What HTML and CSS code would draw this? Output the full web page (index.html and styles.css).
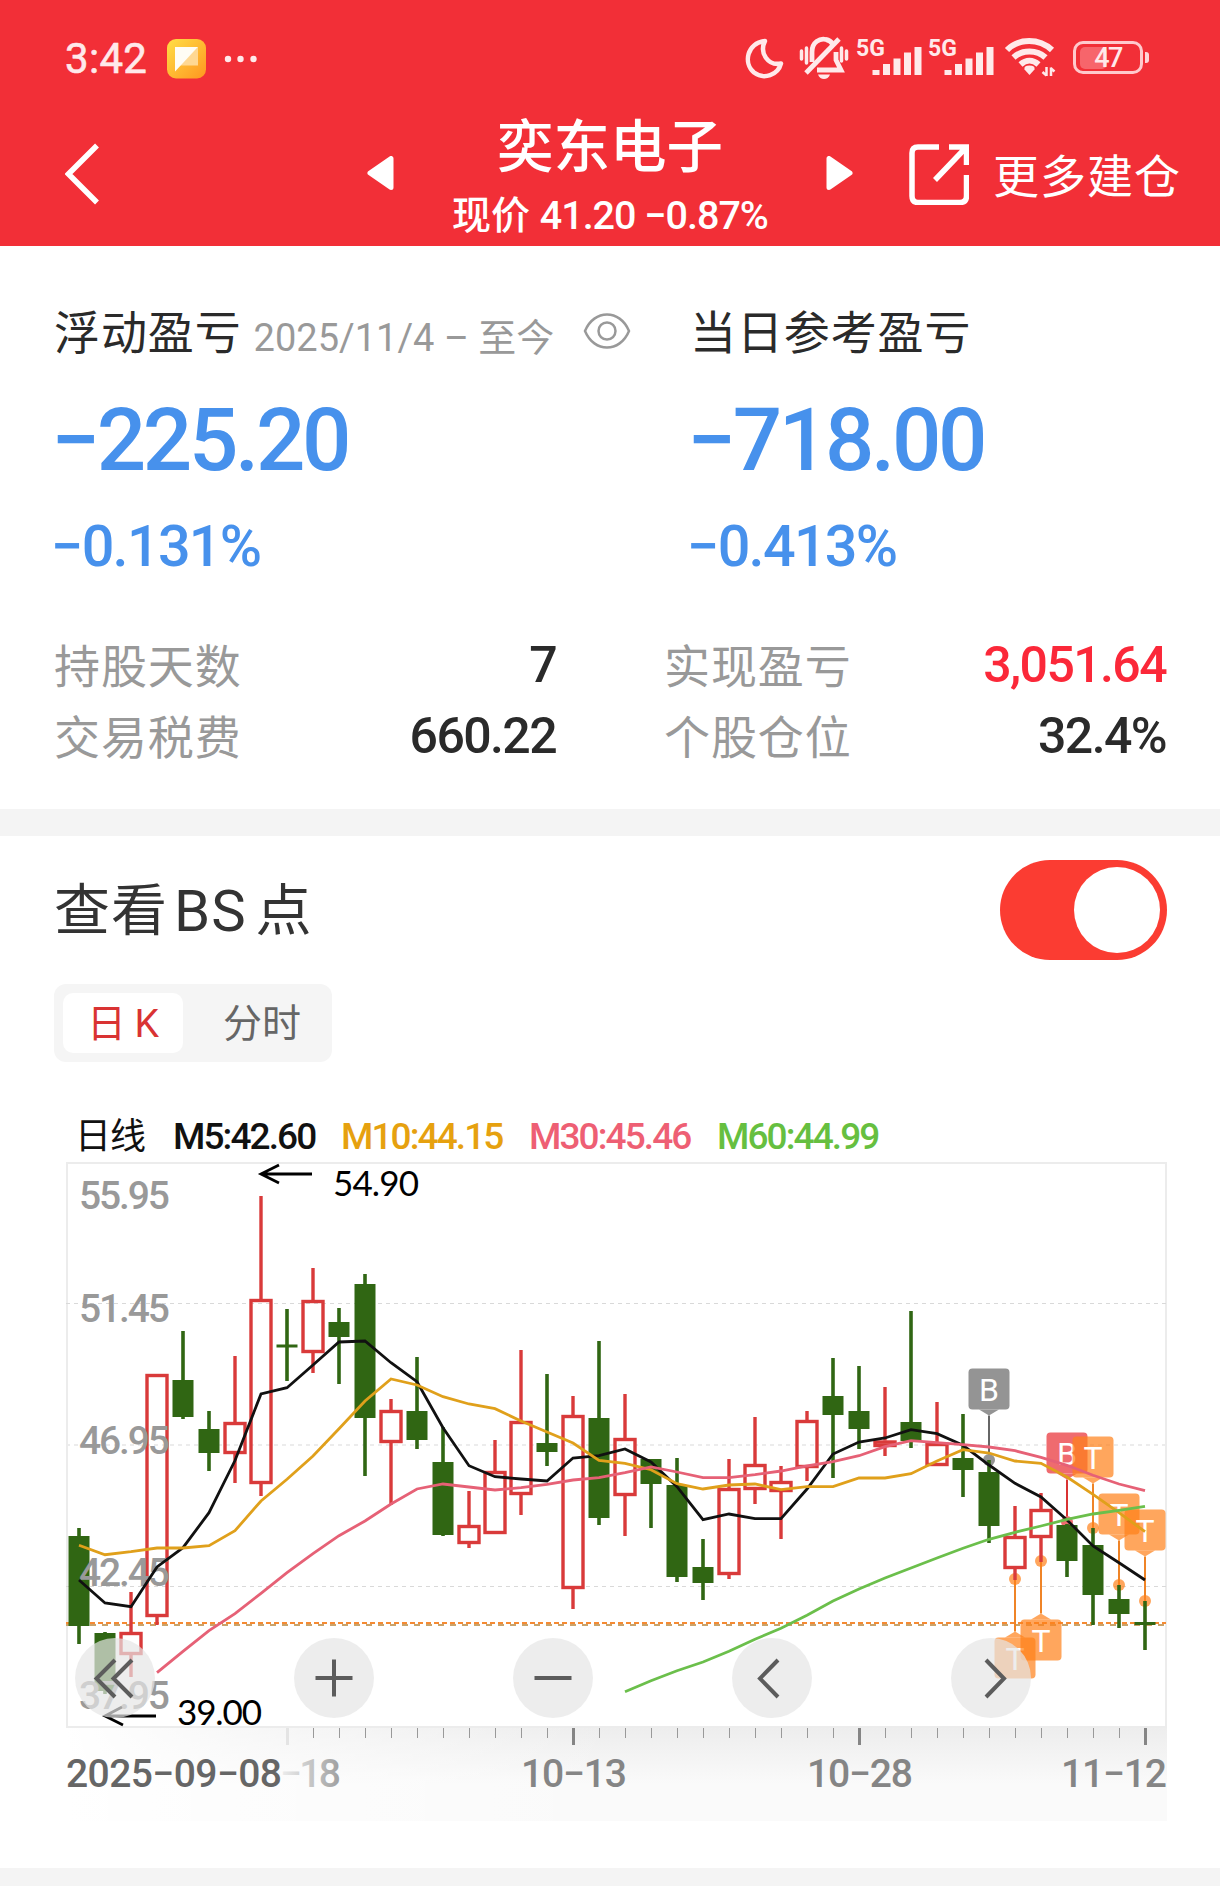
FILE: index.html
```html
<!DOCTYPE html>
<html lang="zh-CN">
<head>
    <meta charset="UTF-8">
    <meta name="viewport" content="width=device-width, initial-scale=1.0">
    <title>奕东电子</title>
    <link rel="stylesheet" href="styles.css">
</head>
<body>
    <header class="header">
        <div class="status-bar">
            <span class="clock">3:42</span>
            <svg class="app-icon" width="40" height="40" viewBox="0 0 40 40">
                <defs>
                    <linearGradient id="app-bg" x1="0" y1="0" x2="1" y2="1">
                        <stop offset="0" stop-color="#ffdf45"/>
                        <stop offset="1" stop-color="#ff9620"/>
                    </linearGradient>
                </defs>
                <rect width="39" height="39.5" rx="9" fill="url(#app-bg)"/>
                <path d="M31 8v18.500H13z" fill="#ffd892"/>
                <path d="M8 8h23L8 32.500z" fill="#fffdf5"/>
            </svg>
            <svg class="dots" width="34" height="8" viewBox="0 0 34 8">
                <circle cx="4" cy="4" r="3.200"/><circle cx="16.500" cy="4" r="3.200"/><circle cx="29.500" cy="4" r="3.200"/>
            </svg>
            <div class="status-icons">
                <svg class="moon" width="40" height="42" viewBox="0 0 40 42">
                    <path d="M20 3C14 15 23 28 36 25.500C33 37 19 42 9 34.500C-2 25 2 5 20 3z"/>
                </svg>
                <svg class="bell" width="50" height="44" viewBox="0 0 50 44">
                    <path d="M13 26V16C13 6 21 2 27 3.500C30.500 4 32.500 6 34 8.500M37 16V24L42 34H18"/>
                    <path d="M40 3L7 37"/>
                    <path class="waves" d="M2.500 15v8M7.500 12v15M42.500 12v13M47.500 15v8"/>
                    <path class="solid" d="M19 38.500h12c-2 6-10 6-12 0z"/>
                </svg>
                <div class="signal">
                    <span>5G</span>
                    <svg width="50" height="34" viewBox="0 0 50 34">
                        <path d="M4 32V27M14.500 32V21M25 32V15.500M35.500 32V9.500M46 32V4"/>
                    </svg>
                </div>
                <div class="signal">
                    <span>5G</span>
                    <svg width="50" height="34" viewBox="0 0 50 34">
                        <path d="M4 32V27M14.500 32V21M25 32V15.500M35.500 32V9.500M46 32V4"/>
                    </svg>
                </div>
                <svg class="wifi" width="52" height="42" viewBox="0 0 52 42">
                    <path d="M3 14C15 2 35 2 48 14M9.500 21.500C18 13.500 33 13.500 41.500 21.500M16.500 28.500C22 23.500 29 23.500 34.500 28.500"/>
                    <path class="solid" d="M25.500 29.500q6 0 5 4l-5 5.500-5-5.500q-1-4 5-4z"/>
                    <path class="thin" d="M42.500 31v9M42.500 39.500l-4-3.500M47 40v-8.500M46.500 32l4 3.500"/>
                </svg>
                <div class="battery"><i></i><span>47</span></div>
            </div>
        </div>
        <nav class="nav">
            <svg class="back" width="36" height="62" viewBox="0 0 36 62">
                <path d="M32 2.500L3.500 31L32 59.500"/>
            </svg>
            <svg class="prev" width="27" height="34" viewBox="0 0 27 34"><path d="M24 2.500V31.500L3 17z"/></svg>
            <div class="stock">
                <h1>奕东电子</h1>
                <p>现价 <b>41.20 −0.87%</b></p>
            </div>
            <svg class="next" width="27" height="34" viewBox="0 0 27 34"><path d="M3 2.500V31.500L24 17z"/></svg>
            <svg class="share" width="60" height="61" viewBox="0 0 60 61">
                <path d="M30 3H9Q3 3 3 9V52Q3 58.500 9 58.500H51Q57.500 58.500 57.500 52V31"/>
                <path d="M40 3H57.500V21M57 3.500L26 36"/>
            </svg>
            <span class="more">更多建仓</span>
        </nav>
    </header>

    <section class="summary">
        <div class="profits">
            <div class="profit">
                <div class="profit-title">
                    <span>浮动盈亏</span>
                    <small>2025/11/4 – 至今</small>
                    <svg class="eye" width="48" height="38" viewBox="0 0 48 38">
                        <path d="M2 19C11-3 37-3 46 19C37 41 11 41 2 19z"/>
                        <circle cx="24" cy="19" r="8.500"/>
                    </svg>
                </div>
                <div class="amount">−225.20</div>
                <div class="rate">−0.131%</div>
            </div>
            <div class="profit">
                <div class="profit-title"><span>当日参考盈亏</span></div>
                <div class="amount">−718.00</div>
                <div class="rate">−0.413%</div>
            </div>
        </div>
        <div class="details">
            <div class="detail"><span>持股天数</span><b>7</b></div>
            <div class="detail"><span>实现盈亏</span><b class="up">3,051.64</b></div>
            <div class="detail"><span>交易税费</span><b>660.22</b></div>
            <div class="detail"><span>个股仓位</span><b>32.4%</b></div>
        </div>
    </section>

    <section class="points">
        <div class="points-head">
            <h2>查看<span>BS</span>点</h2>
            <div class="switch"><i></i></div>
        </div>
        <div class="tabs">
            <span class="tab active">日 K</span>
            <span class="tab">分时</span>
        </div>
        <div class="legend">
            <span class="name">日线</span>
            <span>M5:42.60</span>
            <span class="m10">M10:44.15</span>
            <span class="m30">M30:45.46</span>
            <span class="m60">M60:44.99</span>
        </div>
        <div class="chart">
            <svg id="kline" width="1220" height="670" viewBox="0 0 1220 670">
                <defs>
                    <linearGradient id="axis-bg" x1="0" y1="0" x2="0" y2="1">
                        <stop offset="0" stop-color="#ededed"/>
                        <stop offset=".6" stop-color="#fafafa"/>
                        <stop offset="1" stop-color="#fafafa"/>
                    </linearGradient>
                    <linearGradient id="axis-fade" x1="0" y1="0" x2="1" y2="0">
                        <stop offset="0" stop-color="#fff"/>
                        <stop offset=".15" stop-color="#fff" stop-opacity=".6"/>
                        <stop offset=".5" stop-color="#fff" stop-opacity="0"/>
                        <stop offset="1" stop-color="#fff" stop-opacity="0"/>
                    </linearGradient>
                    <linearGradient id="label-fade" gradientUnits="userSpaceOnUse" x1="280" y1="0" x2="345" y2="0">
                        <stop offset="0" stop-color="#eee"/>
                        <stop offset="1" stop-color="#999"/>
                    </linearGradient>
                </defs>
                <rect x="67" y="568" width="1100" height="93" fill="url(#axis-bg)"/>
                <rect x="67" y="568" width="1100" height="93" fill="url(#axis-fade)"/>
                <rect class="frame" x="67" y="3" width="1099" height="564"/>
                <path class="grid" d="M66 143.500H1166M66 426.500H1166"/>
                <path class="grid mid" d="M66 285H1166"/>
                <path class="cost" d="M66 465H1166"/>
                <path class="now" d="M66 463H1166"/>
                <g id="markers"></g>
                <g id="candles"></g>
                <g class="price-labels">
                    <text x="79" y="49" textLength="91">55.95</text>
                    <text x="79" y="162" textLength="91">51.45</text>
                    <text x="79" y="294" textLength="91">46.95</text>
                    <text x="79" y="425.500" textLength="91">42.45</text>
                    <text x="79" y="548.500" textLength="91">37.95</text>
                </g>
                <g id="averages"></g>
                <g class="extremes">
                    <path d="M312 14H261M279 5L261 14L279 23"/>
                    <text x="333" y="36" textLength="86">54.90</text>
                    <path d="M156 556H105M122 547L105 556L123 565"/>
                    <text x="177" y="565" textLength="85">39.00</text>
                </g>
                <g id="ticks"></g>
                <g class="dates">
                    <text class="first" x="66" y="626.500" textLength="216">2025−09−08</text>
                    <text class="faded" x="280" y="626.500" textLength="61">−18</text>
                    <text x="521" y="626.500" textLength="106">10−13</text>
                    <text x="807" y="626.500" textLength="106">10−28</text>
                    <text x="1061" y="626.500" textLength="106">11−12</text>
                </g>
            </svg>
            <div class="controls">
                <button><svg viewBox="0 0 80 80"><path d="M40 22L21.500 40.500L40 59M57 22L38.500 40.500L57 59"/></svg></button>
                <button><svg viewBox="0 0 80 80"><path d="M40 21.500V58.500M21.500 40H58.500"/></svg></button>
                <button><svg viewBox="0 0 80 80"><path d="M21.500 40H58.500"/></svg></button>
                <button><svg viewBox="0 0 80 80"><path d="M46 22L28 40.500L46 59"/></svg></button>
                <button><svg viewBox="0 0 80 80"><path d="M35 22L53 40.500L35 59"/></svg></button>
            </div>
        </div>
    </section>

    <script>
        const STEP = 26;
        const FIRST_X = 79;

        // high, body top, body bottom, low, rising
        const candles = [
            [368, 376, 466, 484, 0], [472, 473, 531, 534, 0], [432, 472, 495, 517, 1],
            [214, 214, 457, 465, 1], [171, 220, 257, 259, 0], [251, 269, 293, 311, 0],
            [196, 262, 294, 323, 1], [36, 139, 324, 336, 1], [149, 184.5, 187.5, 221, 0],
            [108, 140, 193, 213, 1], [148, 162, 177, 224, 0], [114, 124, 258, 316, 0],
            [239, 250, 283, 345, 1], [197, 251, 280, 289, 0], [267, 302, 375, 376, 0],
            [331, 365, 384, 388, 1], [280, 311, 374, 374, 1], [190, 261, 335, 355, 1],
            [214, 283, 292, 306, 0], [236, 255, 429, 449, 1], [181, 258, 358, 365, 0],
            [234, 278, 336, 376, 1], [299, 299, 324, 368, 0], [298, 325, 417, 422, 0],
            [379, 407, 423, 440, 0], [299, 328, 415, 419, 1], [257, 304, 330, 344, 1],
            [306, 321, 332, 379, 1], [251, 260, 308, 321, 1], [198, 236, 255, 318, 0],
            [206, 251, 269, 289, 0], [227, 280.5, 287, 296, 1], [151, 262, 281, 288, 0],
            [242, 283, 306, 306, 1], [254, 298, 310, 337, 0], [300, 312, 366, 383, 0],
            [346, 376, 409, 420, 1], [333, 349, 378, 402, 1], [364, 365, 401, 417, 0],
            [368, 385, 435, 465, 0], [425, 439, 454, 468, 0], [441, 462, 465, 490, 0]
        ];

        const averages = [
            { color: '#111', start: 0, y: [420, 443, 446.7, 407, 387.7, 352.7, 300.5, 234, 227.7, 205, 182, 181, 202.7, 221.7, 267.7, 305.7, 316.7, 319, 321, 298, 295.7, 289, 302, 326.7, 359.7, 354, 358.7, 358.7, 329, 294, 282, 278, 269.7, 273.7, 285.3, 305, 323.3, 337, 360, 386, 402.7, 420] },
            { color: '#e0a01b', start: 0, y: [385.3, 394.7, 391.7, 388, 388, 385.7, 370.7, 341, 319.3, 296, 268.7, 241, 219, 225, 236.7, 244, 248.7, 261, 272, 283, 300.3, 303.3, 309.7, 323.7, 329, 325, 324, 329.7, 326.7, 326.7, 318, 318, 313.7, 301, 289.7, 293, 301, 303.3, 317, 334.3, 352.7, 371.7] },
            { color: '#e66176', start: 3, y: [512.7, 491.3, 470.7, 453.7, 433.3, 412.7, 393.7, 375.7, 361, 344, 329, 324, 327, 330, 327.7, 324.3, 320, 317.7, 312.7, 307, 312, 317.7, 317.7, 314.7, 311, 306, 301.7, 295.7, 286.7, 280.7, 282.7, 284.7, 287, 290.7, 297.3, 305.3, 315.3, 324, 330.7] },
            { color: '#6bbf4b', start: 21, y: [531.7, 520.7, 510.7, 502, 491.3, 479.3, 468.3, 455.3, 441, 429, 418, 408, 398, 388.3, 379.3, 372.3, 366, 359.3, 354, 350.3, 346.3] }
        ];

        // box is the top of the label, dot is the end of its stem
        const markers = [
            { i: 35, text: 'B', type: 'gray', box: 208.5, dot: 300 },
            { i: 38, text: 'B', type: 'buy', box: 272.5, dot: 362 },
            { i: 39, text: 'T', type: 'both', box: 276.5, dot: 368 },
            { i: 36, text: 'T', type: 'both', box: 477.5, dot: 419 },
            { i: 37, text: 'T', type: 'both', box: 459.5, dot: 401 },
            { i: 40, text: 'T', type: 'both', box: 333.5, dot: 425 },
            { i: 41, text: 'T', type: 'both', box: 349.5, dot: 441 }
        ];

        const px = i => FIRST_X + i * STEP;

        document.getElementById('candles').innerHTML = candles.map(([high, top, bottom, low, up], i) => {
            const x = px(i);
            if (up) {
                return `<path class="up" d="M${x} ${high}V${top}M${x} ${bottom}V${low}"/>
                    <rect class="up" x="${x - 10}" y="${top + 1.5}" width="20" height="${bottom - top - 3}"/>`;
            }
            return `<path class="down" d="M${x} ${high}V${low}"/>
                <rect class="down" x="${x - 10.5}" y="${top}" width="21" height="${bottom - top}"/>`;
        }).join('');

        document.getElementById('averages').innerHTML = averages.map(line => {
            const points = line.y.map((y, n) => `${px(line.start + n)},${y}`).join(' ');
            return `<polyline points="${points}" stroke="${line.color}"/>`;
        }).join('');

        document.getElementById('markers').innerHTML = markers.map(m => {
            const x = px(m.i);
            const below = m.box > m.dot;
            const edge = below ? m.box : m.box + 41;
            const tip = below ? edge - 6 : edge + 6;
            return `<g class="${m.type}">
                <path class="stem" d="M${x} ${m.dot}V${tip}"/>
                <circle cx="${x}" cy="${m.dot}" r="6"/>
                <rect x="${x - 20.5}" y="${m.box}" width="41" height="41" rx="4"/>
                <path d="M${x - 10} ${edge}H${x + 10}L${x} ${tip}z"/>
                <text x="${x}" y="${m.box + 32}">${m.text}</text>
            </g>`;
        }).join('');

        let ticks = '<path class="major light" d="M287.500 568V585"/>';
        for (let i = 9; i < candles.length; i++) {
            const major = i === 19 || i === 30 || i === 41;
            ticks += `<path class="${major ? 'major' : ''}" d="M${px(i) + 0.5} 568V${major ? 585 : 578}"/>`;
        }
        document.getElementById('ticks').innerHTML = ticks;
    </script>
</body>
</html>
```

FILE: styles.css
```css
:root {
    --red: #f22f37;
    --blue: #4791ec;
    --text: #2a2a2a;
    --gray: #999;
    --line: #f4f4f4;
}

* {
    margin: 0;
    padding: 0;
    box-sizing: border-box;
}

body {
    width: 1220px;
    height: 1886px;
    overflow: hidden;
    background: #fff;
    color: var(--text);
    font-family: Roboto, 'Noto Sans CJK SC', sans-serif;
}

svg {
    display: block;
    flex: none;
    fill: none;
}

/* header */
.header {
    height: 246px;
    background: var(--red);
    color: #fff;
}

.status-bar {
    display: flex;
    align-items: center;
    height: 118px;
    padding: 0 72px 0 65px;
    color: #ffe9ea;
}

.clock {
    width: 102px;
    font-size: 42px;
    line-height: 50px;
    letter-spacing: 0.3px;
    -webkit-text-stroke: 0.6px #ffe9ea;
}

.dots {
    margin-left: 17px;
    fill: #ffe9ea;
}

.status-icons {
    display: flex;
    align-items: center;
    margin-left: auto;
    stroke: #ffe9ea;
}

.moon {
    stroke-width: 4.5;
    stroke-linejoin: round;
    margin-right: 14px;
}

.bell {
    stroke-width: 4.8;
    margin: 0 7px 2px 0;
}

.bell .waves {
    stroke-width: 3.5;
    stroke-linecap: round;
}

.solid {
    fill: #ffe9ea;
    stroke: none;
}

.signal {
    display: grid;
    width: 66px;
    height: 42px;
    margin-right: 6px;
}

.signal span {
    grid-area: 1 / 1;
    font-size: 23px;
    line-height: 22px;
    font-weight: 700;
}

.signal svg {
    grid-area: 1 / 1;
    justify-self: end;
    align-self: end;
    margin-bottom: 3px;
    stroke-width: 7;
}

.wifi {
    stroke-width: 6;
    margin: 0 15px 4px 4px;
}

.wifi .thin {
    stroke-width: 2.5;
}

.battery {
    display: grid;
    position: relative;
    width: 70px;
    height: 33px;
    margin: 0 5px 3px 2px;
    border: 3px solid #ffc9cc;
    border-radius: 10px;
}

.battery::after {
    content: '';
    position: absolute;
    right: -9px;
    top: 8px;
    width: 4px;
    height: 11px;
    border-radius: 0 3px 3px 0;
    background: #ffd5d7;
}

.battery i {
    grid-area: 1 / 1;
    width: 27px;
    margin: 3px 4px;
    border-radius: 5px;
    background: #f7656b;
}

.battery span {
    grid-area: 1 / 1;
    z-index: 1;
    text-align: center;
    font-size: 27px;
    line-height: 28px;
    font-weight: 500;
    letter-spacing: -1.5px;
}

.nav {
    display: flex;
    height: 128px;
    padding-left: 65px;
    stroke: #fff;
}

.back {
    margin-top: 25px;
    stroke-width: 5.5;
}

.prev,
.next {
    margin-top: 38px;
    fill: #fff;
    stroke-width: 5;
    stroke-linejoin: round;
}

.prev {
    margin-left: 266px;
}

.stock {
    width: 432px;
    text-align: center;
    white-space: nowrap;
}

.stock h1 {
    font-size: 56.500px;
    line-height: 66px;
    font-weight: 500;
    margin-top: -3px;
}

.stock p {
    font-size: 39px;
    line-height: 44px;
    margin-top: 13px;
    font-weight: 500;
}

.stock b {
    font-weight: 500;
    font-size: 39.500px;
    letter-spacing: -1px;
}

.share {
    margin: 26px 0 0 56px;
    stroke-width: 5.5;
}

.more {
    margin-left: 24px;
    font-size: 46px;
    line-height: 60px;
    letter-spacing: 1px;
    margin-top: 29px;
}

/* profit summary */
.summary {
    height: 590px;
    padding: 57px 54px 0;
    border-bottom: 27px solid var(--line);
}

.profits {
    display: grid;
    grid-template-columns: 636px 1fr;
}

.profit-title {
    display: flex;
    align-items: center;
    height: 60px;
    font-size: 46px;
    line-height: 60px;
    letter-spacing: 0.9px;
}

.profit-title small {
    margin: 10px 0 0 12px;
    width: 329px;
    color: var(--gray);
    font-size: 38px;
    letter-spacing: 0;
    white-space: nowrap;
}

.eye {
    margin-bottom: 4px;
    stroke: var(--gray);
    stroke-width: 2.5;
}

.amount {
    margin: 27px 0 0 -3px;
    color: var(--blue);
    font-size: 87px;
    line-height: 100px;
    font-weight: 500;
    letter-spacing: -3.3px;
}

.rate {
    margin: 24px 0 0 -3px;
    color: var(--blue);
    font-size: 57.500px;
    line-height: 66px;
    font-weight: 500;
    letter-spacing: -1.7px;
}

.details {
    display: grid;
    grid-template-columns: 502px 502px;
    column-gap: 108px;
    margin-top: 50px;
}

.detail {
    display: flex;
    justify-content: space-between;
    height: 71px;
    line-height: 71px;
}

.detail span {
    padding-top: 2px;
    color: var(--gray);
    font-size: 46px;
    letter-spacing: 0.9px;
}

.detail b {
    font-size: 50px;
    font-weight: 500;
    letter-spacing: -1.6px;
}

.detail .up {
    color: #fb2839;
}

/* BS points */
.points {
    height: 1050px;
    border-bottom: 18px solid var(--line);
}

.points-head {
    display: flex;
    justify-content: space-between;
    padding: 24px 53px 0 54px;
    height: 148px;
}

.points h2 {
    display: flex;
    font-size: 56px;
    line-height: 102px;
    font-weight: 400;
    color: #333;
    letter-spacing: 1px;
}

.points h2 span {
    margin: 0 9px 0 6px;
    font-size: 58px;
}

.switch {
    width: 167px;
    height: 100px;
    padding: 7px;
    border-radius: 50px;
    background: #fb3c32;
}

.switch i {
    display: block;
    width: 86px;
    height: 86px;
    margin-left: auto;
    border-radius: 50%;
    background: #fff;
}

.tabs {
    display: flex;
    width: 278px;
    height: 78px;
    margin-left: 54px;
    padding: 9px;
    border-radius: 12px;
    background: #f5f5f5;
}

.tab {
    width: 120px;
    border-radius: 10px;
    color: #666;
    font-size: 39px;
    line-height: 62px;
    text-align: center;
}

.tab + .tab {
    margin-left: 19px;
}

.tab.active {
    background: #fff;
    color: #d93333;
    word-spacing: -1px;
}

.legend {
    display: flex;
    height: 98px;
    padding: 51px 0 0 75px;
    font-size: 37px;
    line-height: 48px;
    font-weight: 500;
    color: #111;
    letter-spacing: -1.9px;
}

.legend span {
    width: 188px;
    white-space: nowrap;
}

.legend span:nth-child(2) {
    width: 168px;
}

.legend .name {
    width: 98px;
    font-size: 36px;
    font-weight: 400;
    letter-spacing: -1px;
}

.legend .m10 { color: #e6a10f; }
.legend .m30 { color: #ee5f74; }
.legend .m60 { color: #66bf40; }

/* chart */
.chart {
    position: relative;
}

.frame {
    stroke: #ececec;
    stroke-width: 2;
}

.grid {
    stroke: #d9d9d9;
    stroke-dasharray: 4 4;
}

.grid.mid {
    stroke: #ececec;
    stroke-width: 2;
}

.cost {
    stroke: #c9a36b;
    stroke-width: 2;
    stroke-dasharray: 6 6;
}

.now {
    stroke: #f58a33;
    stroke-width: 2;
    stroke-dasharray: 5 3;
}

.chart .up {
    stroke: #d93a3a;
    stroke-width: 3.4;
}

.chart .down {
    stroke: #306613;
    stroke-width: 3.6;
}

.chart rect.down {
    fill: #306613;
    stroke: none;
}

#averages {
    stroke-width: 2.8;
}

#markers text {
    fill: #fff;
    font-family: Roboto, sans-serif;
    font-size: 32px;
    text-anchor: middle;
}

.gray { fill: #949494; stroke: #666; }
.buy { fill: #ef6b6f; stroke: #d93333; }
.both { fill: rgba(255, 128, 24, 0.7); stroke: #ef8427; }

#markers rect,
#markers circle,
#markers text,
#markers path {
    stroke: none;
}

#markers .stem {
    stroke: inherit;
    stroke-width: 2;
}

.price-labels {
    fill: #999;
    font-size: 39px;
    font-weight: 500;
}

.extremes {
    stroke: #000;
    stroke-width: 2.8;
}

.extremes text {
    fill: #000;
    stroke: none;
    font-family: Lato, sans-serif;
    font-size: 35px;
}

#ticks {
    stroke: #999;
}

#ticks .major {
    stroke: #858585;
    stroke-width: 3;
}

#ticks .major.light {
    stroke: #e4e4e4;
}

.dates {
    fill: #858585;
    font-size: 39px;
    font-weight: 500;
}

.dates .first {
    fill: #666;
}

.dates .faded {
    fill: url(#label-fade);
}

.controls {
    position: absolute;
    top: 478px;
    left: 75px;
    display: flex;
    gap: 139px;
}

.controls button {
    width: 80px;
    height: 80px;
    border: 0;
    border-radius: 50%;
    background: rgba(229, 229, 229, 0.7);
}

.controls svg {
    stroke: #5c5c5c;
    stroke-width: 4;
}
```
